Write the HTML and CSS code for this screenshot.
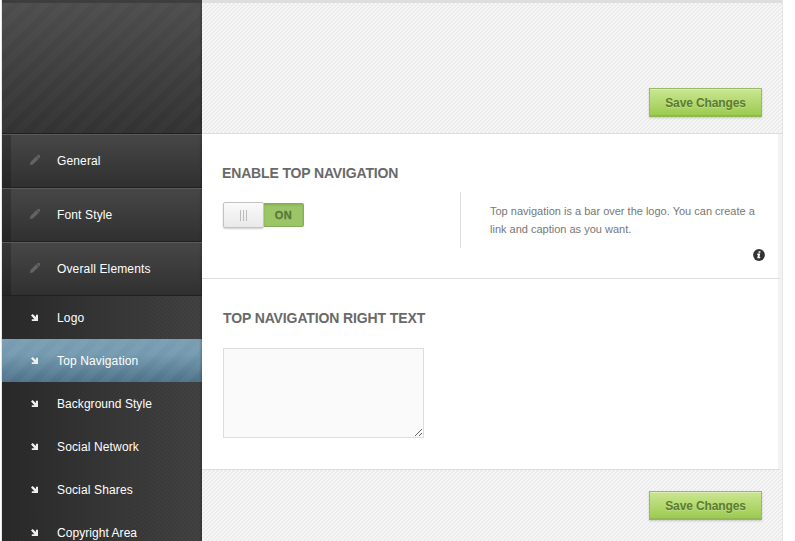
FILE: index.html
```
<!DOCTYPE html>
<html lang="en">
<head>
<meta charset="utf-8">
<title>Top Navigation</title>
<link rel="stylesheet" href="styles.css">
</head>
<body>
<svg width="0" height="0" class="defs">
  <symbol id="pencil" viewBox="0 0 12 12"><path d="M0.8 11 L1.5 7.9 L7.2 2.2 L9.8 4.8 L3.9 10.4Z M7.7 1.9 L8.8 0.9 Q9.6 0.3 10.7 1.2 Q11.6 2.2 11 3.2 L10.1 4.3Z"/></symbol>
  <symbol id="arrow" viewBox="0 0 8 8"><path d="M0 1.4 L1.6 0 L5 3 V0.8 H7 V7 H0.8 V5.2 H3.4Z"/></symbol>
</svg>
<div class="panel">
  <nav class="sidebar">
    <div class="brand"></div>
    <a class="item"><svg class="pencil"><use href="#pencil"/></svg><span>General</span></a>
    <a class="item"><svg class="pencil"><use href="#pencil"/></svg><span>Font Style</span></a>
    <a class="item"><svg class="pencil"><use href="#pencil"/></svg><span>Overall Elements</span></a>
    <div class="submenu">
      <a class="sub"><svg class="arrow"><use href="#arrow"/></svg><span>Logo</span></a>
      <a class="sub active"><svg class="arrow"><use href="#arrow"/></svg><span>Top Navigation</span></a>
      <a class="sub"><svg class="arrow"><use href="#arrow"/></svg><span class="tight">Background Style</span></a>
      <a class="sub"><svg class="arrow"><use href="#arrow"/></svg><span>Social Network</span></a>
      <a class="sub"><svg class="arrow"><use href="#arrow"/></svg><span>Social Shares</span></a>
      <a class="sub"><svg class="arrow"><use href="#arrow"/></svg><span class="tight">Copyright Area</span></a>
    </div>
  </nav>
  <main class="content">
    <header class="bar top"><button class="save">Save Changes</button></header>
    <section class="option first">
      <div class="field">
        <h2>ENABLE TOP NAVIGATION</h2>
        <div class="switch"><div class="knob"><i></i><i></i><i></i></div><div class="on">ON</div></div>
      </div>
      <div class="help">
        <p>Top navigation is a bar over the logo. You can create a link and caption as you want.</p>
      </div>
      <svg class="info" viewBox="0 0 12 12"><circle cx="6" cy="6" r="5.9" fill="#333"/><path d="M5.7 2.3h1.9l-.3 1.5H5.4zM4.4 4.6h2.8l-.7 3.5h.8l-.2 1.2H4.3l.6-3.4h-.8z" fill="#fff"/></svg>
    </section>
    <section class="option second">
      <div class="field">
        <h2 class="wide">TOP NAVIGATION RIGHT TEXT</h2>
        <textarea></textarea>
      </div>
    </section>
    <footer class="bar bottom"><button class="save">Save Changes</button></footer>
  </main>
</div>
</body>
</html>
```
FILE: styles.css
```
* { box-sizing: border-box; }
body { margin: 0; background: #fff; overflow: hidden; font-family: "Liberation Sans", Arial, sans-serif; }
.defs { display: block; height: 0; }
.panel { width: 782px; height: 541px; margin-left: 1px; display: flex; overflow: hidden; border-left: 1px solid #e6e6e6; border-right: 1px solid #e6e6e6; }

.sidebar { width: 200px; flex: none; background: #333; }
.brand {
  height: 133px;
  border-top: 3px solid #3e3e3e;
  background:
    linear-gradient(90deg, transparent 197px, rgba(0,0,0,.2)) padding-box,
    repeating-linear-gradient(135deg, rgba(255,255,255,.018) 0 7.07px, transparent 7.07px 14.14px) padding-box,
    linear-gradient(#4d4d4d, #323232) padding-box;
}
.item {
  display: flex; align-items: center; height: 54px; padding-left: 27px;
  border-top: 1px solid #202020;
  box-shadow: inset 0 1px #5a5a5a;
  background:
    linear-gradient(90deg, rgba(0,0,0,.22) 9px, transparent 9px 197px, rgba(0,0,0,.2)),
    linear-gradient(#474747, #303030);
}
.item span, .sub span { font-size: 12px; line-height: 16px; color: #fff; letter-spacing: .14px; white-space: nowrap; }
.sub .tight { letter-spacing: .05px; }
.pencil { width: 12px; height: 12px; margin-right: 16px; fill: #636363; position: relative; top: -1px; }
.submenu {
  border-top: 1px solid #202020;
  background:
    linear-gradient(90deg, transparent 197px, rgba(0,0,0,.2)),
    repeating-linear-gradient(135deg, rgba(0,0,0,.08) 0 1.414px, transparent 1.414px 2.828px),
    linear-gradient(90deg, #2a2a2a, #434343);
}
.sub { display: flex; align-items: center; height: 43px; padding-left: 29px; }
.arrow { width: 8px; height: 8px; margin-right: 18px; fill: #eee; }
.active {
  background:
    linear-gradient(90deg, transparent 197px, rgba(0,0,0,.2)),
    repeating-linear-gradient(135deg, rgba(255,255,255,.035) 0 7.07px, transparent 7.07px 14.14px),
    linear-gradient(#7a9db2, #749ab0 35%, #4d7188);
}

.content { flex: 1; display: flex; flex-direction: column; }
.bar {
  display: flex; justify-content: flex-end; align-items: flex-start; padding-right: 19px;
  background: repeating-linear-gradient(135deg, #ebebeb 0 1.414px, #f7f7f7 1.414px 2.828px);
}
.top { height: 134px; padding-top: 85px; border-top: 3px solid #dedede; border-bottom: 1px solid #ddd; }
.bottom { flex: 1; padding-top: 21px; }
.save {
  width: 113px; height: 29px; margin-right: 1px; padding: 1px 0 0;
  border: 1px solid #99bb69; border-bottom: 2px solid #8fb953;
  background: linear-gradient(#cbe692, #9ccb50);
  box-shadow: inset 0 1px #d9edae, 0 1px 2px rgba(0,0,0,.18);
  font: bold 12px "Liberation Sans", Arial, sans-serif; letter-spacing: -.12px;
  color: #5d7b2f; text-shadow: 0 1px rgba(255,255,255,.25);
}
.option { position: relative; display: flex; background: #fff; border-right: 4px solid #f2f2f2; border-bottom: 1px solid #ddd; padding-left: 20px; }
.first { height: 145px; }
.second { height: 191px; }
.field { width: 238px; }
h2 { margin: 31px 0 0; font-size: 14px; line-height: 16px; font-weight: bold; color: #696969; white-space: nowrap; letter-spacing: -.15px; }
.wide { padding-left: 1px; letter-spacing: -.12px; }
.switch { display: flex; align-items: center; width: 81px; height: 26px; margin: 21px 0 0 1px; }
.knob {
  display: flex; justify-content: center; align-items: center; gap: 2px; width: 41px; height: 26px;
  border: 1px solid #c4c4c4; border-radius: 2px; background: linear-gradient(#fafafa, #e9e9e9); box-shadow: 0 1px 2px rgba(0,0,0,.2);
}
.knob i { width: 1px; height: 11px; background: #bbb; }
.on {
  width: 40px; height: 24px; border: 1px solid #87ad59; border-left: 0; border-radius: 0 2px 2px 0;
  background: #9cc568; color: #5a783a; font: bold 11px/22px "Liberation Sans", Arial, sans-serif; text-align: center;
  box-shadow: inset 0 1px 2px rgba(60,100,20,.25); letter-spacing: .5px; -webkit-text-stroke: .3px #5a783a;
}
.help { width: 300px; height: 56px; margin-top: 58px; padding: 10px 0 0 29px; border-left: 1px solid #ddd; }
.help p { margin: 0; width: 275px; font-size: 11px; line-height: 18px; letter-spacing: 0; color: #777; }
.info { position: absolute; left: 551px; top: 115px; width: 12px; height: 12px; }
textarea { display: block; width: 201px; height: 90px; margin: 22px 0 0 1px; border: 1px solid #ddd; background: #fafafa; resize: both; outline: 0; }
```
